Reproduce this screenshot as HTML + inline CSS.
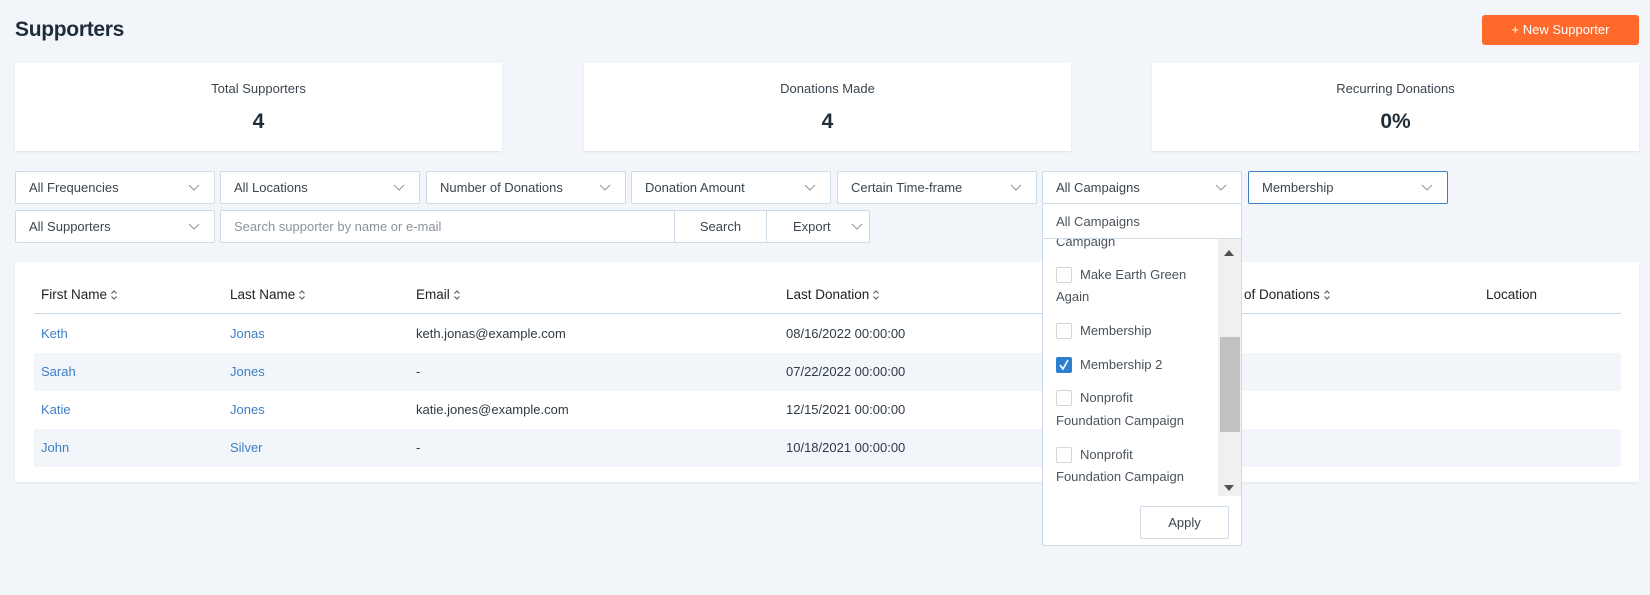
<!DOCTYPE html>
<html><head><meta charset="utf-8"><style>
*{box-sizing:border-box;margin:0;padding:0}
body{width:1650px;height:595px;background:#f2f5f9;font-family:"Liberation Sans",sans-serif;font-size:13px;color:#2f3a45;position:relative;overflow:hidden}
.a{position:absolute}
.title{left:15px;top:18px;font-size:21px;font-weight:bold;color:#1f2d3a;letter-spacing:-0.3px}
.btn{left:1482px;top:15px;width:157px;height:30px;background:#ff6a2b;color:#fff;border-radius:3px;text-align:center;line-height:30px;font-size:13px}
.card{top:63px;height:88px;width:487px;background:#fff;box-shadow:0 1px 2px rgba(0,0,0,.08);text-align:center}
.card .l{margin-top:18px;font-size:13px;color:#3a4550}
.card .v{margin-top:14px;font-size:21px;font-weight:bold;color:#1f2d3a}
.dd{height:33px;width:200px;background:#fff;border:1px solid #cfdbe6;border-radius:2px;line-height:31px;padding-left:13px;color:#3a4550}
.dd svg{position:absolute;right:14px;top:12px}
.tbl{left:15px;top:262px;width:1624px;height:220px;background:#fff;box-shadow:0 1px 2px rgba(0,0,0,.06)}
.row{left:34px;width:1587px;height:38px}
.row span,.hd span{position:absolute;line-height:38px}
.lk{color:#3d7fc4}
.hd span{color:#222;font-size:13.5px}
.s{display:inline-block;vertical-align:middle;margin-left:3px}
.pan{left:1042px;top:203px;width:200px;height:343px;background:#fff;border:1px solid #cfdbe6;border-radius:2px}
.it{position:absolute;left:13px;color:#4a535c;font-size:13px;line-height:15px}
.cb{position:absolute;left:13px;width:16px;height:16px;border:1px solid #cfd6dd;border-radius:2px;background:#fff}
</style></head><body>
<div class="a title">Supporters</div>
<div class="a btn">+ New Supporter</div>
<div class="a card" style="left:15px"><div class="l">Total Supporters</div><div class="v">4</div></div>
<div class="a card" style="left:584px"><div class="l">Donations Made</div><div class="v">4</div></div>
<div class="a card" style="left:1152px"><div class="l">Recurring Donations</div><div class="v">0%</div></div>

<div class="a dd" style="left:15px;top:171px">All Frequencies<svg width="12" height="8"><path d="M1 1l5 5 5-5" fill="none" stroke="#8a96a2"/></svg></div>
<div class="a dd" style="left:220px;top:171px">All Locations<svg width="12" height="8"><path d="M1 1l5 5 5-5" fill="none" stroke="#8a96a2"/></svg></div>
<div class="a dd" style="left:426px;top:171px">Number of Donations<svg width="12" height="8"><path d="M1 1l5 5 5-5" fill="none" stroke="#8a96a2"/></svg></div>
<div class="a dd" style="left:631px;top:171px">Donation Amount<svg width="12" height="8"><path d="M1 1l5 5 5-5" fill="none" stroke="#8a96a2"/></svg></div>
<div class="a dd" style="left:837px;top:171px">Certain Time-frame<svg width="12" height="8"><path d="M1 1l5 5 5-5" fill="none" stroke="#8a96a2"/></svg></div>
<div class="a dd" style="left:1042px;top:171px">All Campaigns<svg width="12" height="8"><path d="M1 1l5 5 5-5" fill="none" stroke="#8a96a2"/></svg></div>
<div class="a dd" style="left:1248px;top:171px;border-color:#3d7fc4">Membership<svg width="12" height="8"><path d="M1 1l5 5 5-5" fill="none" stroke="#8a96a2"/></svg></div>

<div class="a dd" style="left:15px;top:210px">All Supporters<svg width="12" height="8"><path d="M1 1l5 5 5-5" fill="none" stroke="#8a96a2"/></svg></div>
<div class="a dd" style="left:220px;top:210px;width:455px;color:#8a939c">Search supporter by name or e-mail</div>
<div class="a dd" style="left:674px;top:210px;width:93px;padding:0;text-align:center">Search</div>
<div class="a dd" style="left:766px;top:210px;width:104px;padding-left:26px">Export<svg width="12" height="8" style="right:6px"><path d="M1 1l5 5 5-5" fill="none" stroke="#8a96a2"/></svg></div>

<div class="a tbl"></div>
<div class="a row hd" style="top:276px;border-bottom:1px solid #c9d9e6">
<span style="left:7px">First Name<svg class="s" width="8" height="12"><path d="M1.5 4.5L4 2l2.5 2.5M1.5 7.5L4 10l2.5-2.5" fill="none" stroke="#555"/></svg></span>
<span style="left:196px">Last Name<svg class="s" width="8" height="12"><path d="M1.5 4.5L4 2l2.5 2.5M1.5 7.5L4 10l2.5-2.5" fill="none" stroke="#555"/></svg></span>
<span style="left:382px">Email<svg class="s" width="8" height="12"><path d="M1.5 4.5L4 2l2.5 2.5M1.5 7.5L4 10l2.5-2.5" fill="none" stroke="#555"/></svg></span>
<span style="left:752px">Last Donation<svg class="s" width="8" height="12"><path d="M1.5 4.5L4 2l2.5 2.5M1.5 7.5L4 10l2.5-2.5" fill="none" stroke="#555"/></svg></span>
<span style="left:1210px">of Donations<svg class="s" width="8" height="12"><path d="M1.5 4.5L4 2l2.5 2.5M1.5 7.5L4 10l2.5-2.5" fill="none" stroke="#555"/></svg></span>
<span style="left:1452px">Location</span></div>
<div class="a row" style="top:315px"><span class="lk" style="left:7px">Keth</span><span class="lk" style="left:196px">Jonas</span><span style="left:382px">keth.jonas@example.com</span><span style="left:752px">08/16/2022 00:00:00</span></div>
<div class="a row" style="top:353px;background:#f2f5f9"><span class="lk" style="left:7px">Sarah</span><span class="lk" style="left:196px">Jones</span><span style="left:382px">-</span><span style="left:752px">07/22/2022 00:00:00</span></div>
<div class="a row" style="top:391px"><span class="lk" style="left:7px">Katie</span><span class="lk" style="left:196px">Jones</span><span style="left:382px">katie.jones@example.com</span><span style="left:752px">12/15/2021 00:00:00</span></div>
<div class="a row" style="top:429px;background:#f2f5f9"><span class="lk" style="left:7px">John</span><span class="lk" style="left:196px">Silver</span><span style="left:382px">-</span><span style="left:752px">10/18/2021 00:00:00</span></div>

<div class="a pan">
 <div class="it" style="top:10px">All Campaigns</div>
 <div style="position:absolute;left:0;top:34px;width:198px;border-top:1px solid #cfdbe6"></div>
 <div style="position:absolute;left:0;top:35px;width:174px;height:260px;overflow:hidden">
  <div class="it" style="top:-5px">Campaign</div>
  <div class="cb" style="top:28px"></div><div class="it" style="left:37px;top:28px">Make Earth Green</div>
  <div class="it" style="top:50px">Again</div>
  <div class="cb" style="top:84px"></div><div class="it" style="left:37px;top:84px">Membership</div>
  <div class="cb" style="top:118px;background:#2f7fd0;border-color:#2f7fd0"><svg width="14" height="14" style="position:absolute;left:0;top:0"><path d="M3 7l3 4 5-9" fill="none" stroke="#fff" stroke-width="1.6"/></svg></div><div class="it" style="left:37px;top:118px">Membership 2</div>
  <div class="cb" style="top:151px"></div><div class="it" style="left:37px;top:151px">Nonprofit</div>
  <div class="it" style="top:174px">Foundation Campaign</div>
  <div class="cb" style="top:208px"></div><div class="it" style="left:37px;top:208px">Nonprofit</div>
  <div class="it" style="top:230px">Foundation Campaign</div>
 </div>
 <div style="position:absolute;left:175px;top:35px;width:23px;height:257px;background:#f0f0f0"></div>
 <div style="position:absolute;left:177px;top:133px;width:20px;height:95px;background:#c1c1c1"></div>
 <div style="position:absolute;left:181px;top:46px;width:0;height:0;border-left:5px solid transparent;border-right:5px solid transparent;border-bottom:6px solid #505050"></div>
 <div style="position:absolute;left:181px;top:281px;width:0;height:0;border-left:5px solid transparent;border-right:5px solid transparent;border-top:6px solid #505050"></div>
 <div style="position:absolute;left:97px;top:302px;width:89px;height:33px;border:1px solid #cfdbe6;border-radius:2px;text-align:center;line-height:31px;color:#3a4550">Apply</div>
</div>
</body></html>
